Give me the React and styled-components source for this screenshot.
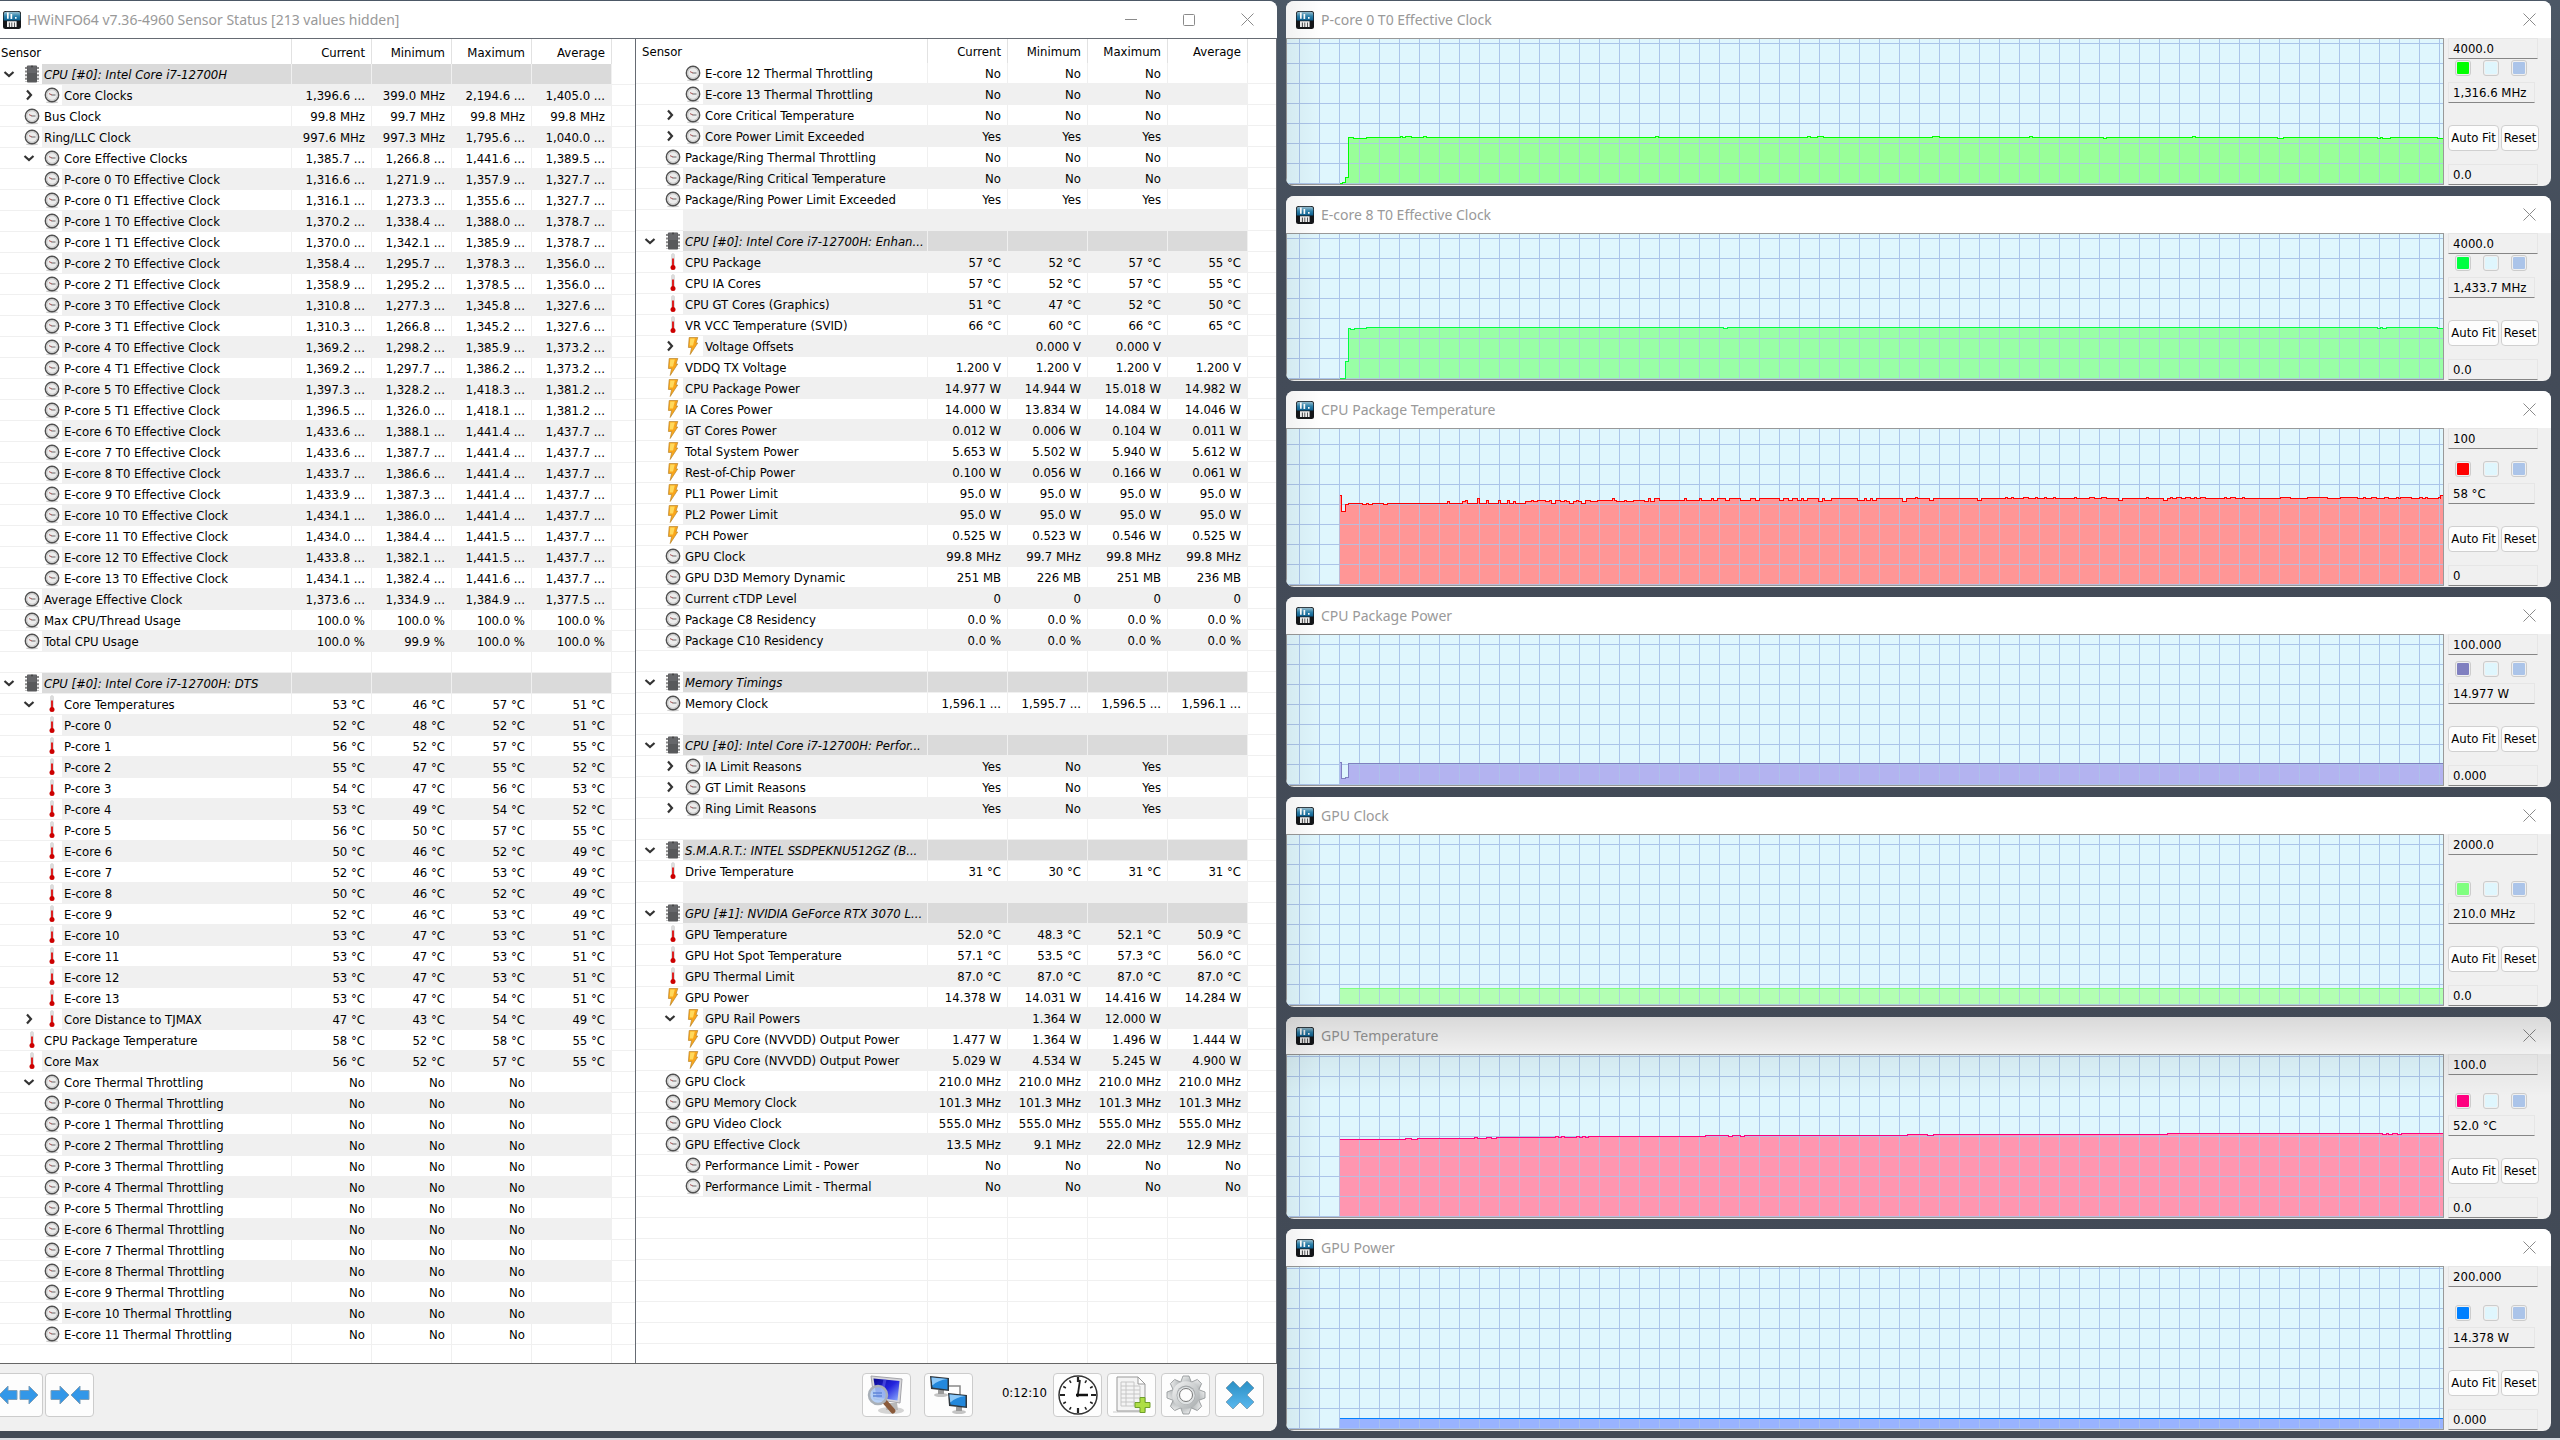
import React from "react";
import styled, { createGlobalStyle, css } from "styled-components";

/* ---------- data ---------- */

// level | icon | chevron | name | current | minimum | maximum | average
const LEFT_ROWS = `
0|chip|open|CPU [#0]: Intel Core i7-12700H
1|gauge|shut|Core Clocks|1,396.6 ...|399.0 MHz|2,194.6 ...|1,405.0 ...
0|gauge||Bus Clock|99.8 MHz|99.7 MHz|99.8 MHz|99.8 MHz
0|gauge||Ring/LLC Clock|997.6 MHz|997.3 MHz|1,795.6 ...|1,040.0 ...
1|gauge|open|Core Effective Clocks|1,385.7 ...|1,266.8 ...|1,441.6 ...|1,389.5 ...
1|gauge||P-core 0 T0 Effective Clock|1,316.6 ...|1,271.9 ...|1,357.9 ...|1,327.7 ...
1|gauge||P-core 0 T1 Effective Clock|1,316.1 ...|1,273.3 ...|1,355.6 ...|1,327.7 ...
1|gauge||P-core 1 T0 Effective Clock|1,370.2 ...|1,338.4 ...|1,388.0 ...|1,378.7 ...
1|gauge||P-core 1 T1 Effective Clock|1,370.0 ...|1,342.1 ...|1,385.9 ...|1,378.7 ...
1|gauge||P-core 2 T0 Effective Clock|1,358.4 ...|1,295.7 ...|1,378.3 ...|1,356.0 ...
1|gauge||P-core 2 T1 Effective Clock|1,358.9 ...|1,295.2 ...|1,378.5 ...|1,356.0 ...
1|gauge||P-core 3 T0 Effective Clock|1,310.8 ...|1,277.3 ...|1,345.8 ...|1,327.6 ...
1|gauge||P-core 3 T1 Effective Clock|1,310.3 ...|1,266.8 ...|1,345.2 ...|1,327.6 ...
1|gauge||P-core 4 T0 Effective Clock|1,369.2 ...|1,298.2 ...|1,385.9 ...|1,373.2 ...
1|gauge||P-core 4 T1 Effective Clock|1,369.2 ...|1,297.7 ...|1,386.2 ...|1,373.2 ...
1|gauge||P-core 5 T0 Effective Clock|1,397.3 ...|1,328.2 ...|1,418.3 ...|1,381.2 ...
1|gauge||P-core 5 T1 Effective Clock|1,396.5 ...|1,326.0 ...|1,418.1 ...|1,381.2 ...
1|gauge||E-core 6 T0 Effective Clock|1,433.6 ...|1,388.1 ...|1,441.4 ...|1,437.7 ...
1|gauge||E-core 7 T0 Effective Clock|1,433.6 ...|1,387.7 ...|1,441.4 ...|1,437.7 ...
1|gauge||E-core 8 T0 Effective Clock|1,433.7 ...|1,386.6 ...|1,441.4 ...|1,437.7 ...
1|gauge||E-core 9 T0 Effective Clock|1,433.9 ...|1,387.3 ...|1,441.4 ...|1,437.7 ...
1|gauge||E-core 10 T0 Effective Clock|1,434.1 ...|1,386.0 ...|1,441.4 ...|1,437.7 ...
1|gauge||E-core 11 T0 Effective Clock|1,434.0 ...|1,384.4 ...|1,441.5 ...|1,437.7 ...
1|gauge||E-core 12 T0 Effective Clock|1,433.8 ...|1,382.1 ...|1,441.5 ...|1,437.7 ...
1|gauge||E-core 13 T0 Effective Clock|1,434.1 ...|1,382.4 ...|1,441.6 ...|1,437.7 ...
0|gauge||Average Effective Clock|1,373.6 ...|1,334.9 ...|1,384.9 ...|1,377.5 ...
0|gauge||Max CPU/Thread Usage|100.0 %|100.0 %|100.0 %|100.0 %
0|gauge||Total CPU Usage|100.0 %|99.9 %|100.0 %|100.0 %
-
0|chip|open|CPU [#0]: Intel Core i7-12700H: DTS
1|temp|open|Core Temperatures|53 °C|46 °C|57 °C|51 °C
1|temp||P-core 0|52 °C|48 °C|52 °C|51 °C
1|temp||P-core 1|56 °C|52 °C|57 °C|55 °C
1|temp||P-core 2|55 °C|47 °C|55 °C|52 °C
1|temp||P-core 3|54 °C|47 °C|56 °C|53 °C
1|temp||P-core 4|53 °C|49 °C|54 °C|52 °C
1|temp||P-core 5|56 °C|50 °C|57 °C|55 °C
1|temp||E-core 6|50 °C|46 °C|52 °C|49 °C
1|temp||E-core 7|52 °C|46 °C|53 °C|49 °C
1|temp||E-core 8|50 °C|46 °C|52 °C|49 °C
1|temp||E-core 9|52 °C|46 °C|53 °C|49 °C
1|temp||E-core 10|53 °C|47 °C|53 °C|51 °C
1|temp||E-core 11|53 °C|47 °C|53 °C|51 °C
1|temp||E-core 12|53 °C|47 °C|53 °C|51 °C
1|temp||E-core 13|53 °C|47 °C|54 °C|51 °C
1|temp|shut|Core Distance to TJMAX|47 °C|43 °C|54 °C|49 °C
0|temp||CPU Package Temperature|58 °C|52 °C|58 °C|55 °C
0|temp||Core Max|56 °C|52 °C|57 °C|55 °C
1|gauge|open|Core Thermal Throttling|No|No|No
1|gauge||P-core 0 Thermal Throttling|No|No|No
1|gauge||P-core 1 Thermal Throttling|No|No|No
1|gauge||P-core 2 Thermal Throttling|No|No|No
1|gauge||P-core 3 Thermal Throttling|No|No|No
1|gauge||P-core 4 Thermal Throttling|No|No|No
1|gauge||P-core 5 Thermal Throttling|No|No|No
1|gauge||E-core 6 Thermal Throttling|No|No|No
1|gauge||E-core 7 Thermal Throttling|No|No|No
1|gauge||E-core 8 Thermal Throttling|No|No|No
1|gauge||E-core 9 Thermal Throttling|No|No|No
1|gauge||E-core 10 Thermal Throttling|No|No|No
1|gauge||E-core 11 Thermal Throttling|No|No|No
`;

const RIGHT_ROWS = `
1|gauge||E-core 12 Thermal Throttling|No|No|No
1|gauge||E-core 13 Thermal Throttling|No|No|No
1|gauge|shut|Core Critical Temperature|No|No|No
1|gauge|shut|Core Power Limit Exceeded|Yes|Yes|Yes
0|gauge||Package/Ring Thermal Throttling|No|No|No
0|gauge||Package/Ring Critical Temperature|No|No|No
0|gauge||Package/Ring Power Limit Exceeded|Yes|Yes|Yes
-
0|chip|open|CPU [#0]: Intel Core i7-12700H: Enhan...
0|temp||CPU Package|57 °C|52 °C|57 °C|55 °C
0|temp||CPU IA Cores|57 °C|52 °C|57 °C|55 °C
0|temp||CPU GT Cores (Graphics)|51 °C|47 °C|52 °C|50 °C
0|temp||VR VCC Temperature (SVID)|66 °C|60 °C|66 °C|65 °C
1|bolt|shut|Voltage Offsets||0.000 V|0.000 V
0|bolt||VDDQ TX Voltage|1.200 V|1.200 V|1.200 V|1.200 V
0|bolt||CPU Package Power|14.977 W|14.944 W|15.018 W|14.982 W
0|bolt||IA Cores Power|14.000 W|13.834 W|14.084 W|14.046 W
0|bolt||GT Cores Power|0.012 W|0.006 W|0.104 W|0.011 W
0|bolt||Total System Power|5.653 W|5.502 W|5.940 W|5.612 W
0|bolt||Rest-of-Chip Power|0.100 W|0.056 W|0.166 W|0.061 W
0|bolt||PL1 Power Limit|95.0 W|95.0 W|95.0 W|95.0 W
0|bolt||PL2 Power Limit|95.0 W|95.0 W|95.0 W|95.0 W
0|bolt||PCH Power|0.525 W|0.523 W|0.546 W|0.525 W
0|gauge||GPU Clock|99.8 MHz|99.7 MHz|99.8 MHz|99.8 MHz
0|gauge||GPU D3D Memory Dynamic|251 MB|226 MB|251 MB|236 MB
0|gauge||Current cTDP Level|0|0|0|0
0|gauge||Package C8 Residency|0.0 %|0.0 %|0.0 %|0.0 %
0|gauge||Package C10 Residency|0.0 %|0.0 %|0.0 %|0.0 %
-
0|chip|open|Memory Timings
0|gauge||Memory Clock|1,596.1 ...|1,595.7 ...|1,596.5 ...|1,596.1 ...
-
0|chip|open|CPU [#0]: Intel Core i7-12700H: Perfor...
1|gauge|shut|IA Limit Reasons|Yes|No|Yes
1|gauge|shut|GT Limit Reasons|Yes|No|Yes
1|gauge|shut|Ring Limit Reasons|Yes|No|Yes
-
0|chip|open|S.M.A.R.T.: INTEL SSDPEKNU512GZ (B...
0|temp||Drive Temperature|31 °C|30 °C|31 °C|31 °C
-
0|chip|open|GPU [#1]: NVIDIA GeForce RTX 3070 L...
0|temp||GPU Temperature|52.0 °C|48.3 °C|52.1 °C|50.9 °C
0|temp||GPU Hot Spot Temperature|57.1 °C|53.5 °C|57.3 °C|56.0 °C
0|temp||GPU Thermal Limit|87.0 °C|87.0 °C|87.0 °C|87.0 °C
0|bolt||GPU Power|14.378 W|14.031 W|14.416 W|14.284 W
1|bolt|open|GPU Rail Powers||1.364 W|12.000 W
1|bolt||GPU Core (NVVDD) Output Power|1.477 W|1.364 W|1.496 W|1.444 W
1|bolt||GPU Core (NVVDD) Output Power|5.029 W|4.534 W|5.245 W|4.900 W
0|gauge||GPU Clock|210.0 MHz|210.0 MHz|210.0 MHz|210.0 MHz
0|gauge||GPU Memory Clock|101.3 MHz|101.3 MHz|101.3 MHz|101.3 MHz
0|gauge||GPU Video Clock|555.0 MHz|555.0 MHz|555.0 MHz|555.0 MHz
0|gauge||GPU Effective Clock|13.5 MHz|9.1 MHz|22.0 MHz|12.9 MHz
1|gauge||Performance Limit - Power|No|No|No|No
1|gauge||Performance Limit - Thermal|No|No|No|No
`;

const BODY_ROWS = 62;

function parseRows(text) {
  const rows = text
    .trim()
    .split("\n")
    .map((line, i) => {
      if (line === "-") return { kind: "gap", tone: i % 2 ? "odd" : "even", values: ["", "", "", ""] };
      const [level, icon, chevron, name, ...v] = line.split("|");
      return {
        kind: icon === "chip" ? "section" : "value",
        tone: icon === "chip" ? "section" : i % 2 ? "odd" : "even",
        level: Number(level),
        icon,
        chevron,
        name,
        values: [0, 1, 2, 3].map((k) => v[k] || ""),
      };
    });
  while (rows.length < BODY_ROWS) rows.push({ kind: "gap", tone: "even", values: ["", "", "", ""] });
  return rows;
}

// Traces are lists of [x, y]: the level y holds from x to the next entry.
const tempTrace = (() => {
  const early =
    "206:346 214:394 226:373 235:370 277:373 289:370 295:373 307:370 340:373 352:370 532:364 538:370 577:364 586:361 592:370 622:355 628:370 649:361 655:370 685:361 691:370 712:361 718:370 730:364 736:370 766:364 784:361 790:364 802:361 826:364 838:361 844:370 856:361 871:364 883:361 889:364 898:370 910:364 919:361 925:364 934:370 946:361 961:364 982:361 1027:355 1033:361 1039:364 1063:361 1069:364 1090:361 1123:364 1135:355 1141:364 1153:355 1168:361 1243:355 1249:361 1288:355 1294:361 1324:355 1330:361 1342:355 1366:361 1378:355 1411:361 1441:355 1456:361 1468:355"
      .split(" ")
      .map((p) => p.split(":").map(Number));
  const late =
    "58-70:361 85-97:361 112-124:361 130-142:361 175-187:364 193-214:361 292-313:361 319-331:361 337-349:361 427-439:364 466-472:352 508-520:361 652-664:361 736-742:352 754-760:352 790-805:352 826-832:352 853-859:352 880-886:352 943-949:352 988-1003:352 1024-1039:352 1075-1087:361 1159-1165:352 1210-1222:361 1231-1237:352 1249-1264:352 1276-1291:352 1303-1309:352 1321-1336:352 1393-1399:352 1411-1426:352 1447-1453:352 1560-1590:352 1640-1700:352 1740-1790:352 1808-1815:352 1834-1848:352 1872-1884:352 1908-1915:352 1920-1952:352 1976-1985:352 1995-2002:352 2034-2040:352"
      .split(" ")
      .flatMap((p) => {
        const [range, y] = p.split(":");
        const [a, b] = range.split("-").map(Number);
        return [
          [1470 + a, Number(y)],
          [1470 + b, 355],
        ];
      });
  return [...early, ...late, [3510, 346]].map(([x, y]) => [Math.round(x / 3) - 17, Math.floor(y / 3) - 49]);
})();

const GRAPHS = [
  {
    title: "P-core 0 T0 Effective Clock", max: "4000.0", value: "1,316.6 MHz", min: "0.0",
    line: "#00ff00", fill: "#99ff99", size: 185,
    trace: [[52,144],[55,143],[58,138],[61,98],[66,99],[79,98],[113,97],[115,98],[118,97],[124,98],[136,97],[139,98],[368,97],[371,98],[520,97],[523,98],[530,97],[536,98],[645,97],[652,98],[742,97],[745,98],[816,99],[819,98],[905,97],[908,98],[990,99],[996,98],[1090,99],[1093,98],[1095,99],[1103,98],[1150,99]],
  },
  {
    title: "E-core 8 T0 Effective Clock", max: "4000.0", value: "1,433.7 MHz", min: "0.0",
    line: "#00ff40", fill: "#99ffa6", size: 185,
    trace: [[52,144],[58,127],[61,94],[63,95],[67,94],[79,93],[436,94],[440,93],[1090,94],[1093,93],[1095,94],[1099,93],[1150,94]],
  },
  {
    title: "CPU Package Temperature", max: "100", value: "58 °C", min: "0",
    line: "#ff0000", fill: "#ff9696", size: 196, trace: tempTrace,
  },
  {
    title: "CPU Package Power", max: "100.000", value: "14.977 W", min: "0.000",
    line: "#8080c0", fill: "#b3b3f0", size: 190,
    trace: [[52,127],[54,143],[58,142],[61,128]],
  },
  {
    title: "GPU Clock", max: "2000.0", value: "210.0 MHz", min: "0.0",
    line: "#80ff80", fill: "#b3ffb3", size: 210, trace: [[52,153]],
  },
  {
    title: "GPU Temperature", max: "100.0", value: "52.0 °C", min: "0.0",
    line: "#ff0080", fill: "#ff96b0", size: 202, shaded: true,
    trace: [[52,84],[118,83],[124,84],[130,83],[187,82],[190,83],[199,82],[204,83],[209,82],[268,81],[271,82],[274,81],[277,82],[289,81],[292,82],[295,81],[298,82],[301,81],[418,80],[441,81],[445,80],[453,81],[457,80],[620,79],[640,80],[646,79],[880,78],[1095,79],[1099,78],[1101,79],[1105,78],[1110,79],[1114,78]],
  },
  {
    title: "GPU Power", max: "200.000", value: "14.378 W", min: "0.000",
    line: "#0080ff", fill: "#99b3ff", size: 202, trace: [[52,151]],
  },
];

/* ---------- styles ---------- */

const UI_FONT = `"DejaVu Sans Condensed", "DejaVu Sans", sans-serif`;
const TITLE_FONT = `"Noto Sans", sans-serif`;

const GlobalStyle = createGlobalStyle`
  *, *::before, *::after { box-sizing: border-box; }
  body { margin: 0; background: #434c59; color: #000; font-family: ${UI_FONT}; font-size: 13px; line-height: 16px; }
  button, input { font: inherit; color: inherit; margin: 0; }
`;

const Desktop = styled.main`
  display: grid;
  grid-template-columns: minmax(0, 1277fr) minmax(0, 1265fr);
  gap: 9px;
  height: 100vh;
  padding: 1px 9px 7px 0;
  border-bottom: 2px solid #d9dce2;
  background: linear-gradient(#4c5866, #434b58 20%, #424a56);
`;

const MainWindow = styled.section`
  display: flex;
  flex-direction: column;
  min-height: 0;
  background: #f0f0f0;
  border-radius: 0 8px 8px 0;
  overflow: hidden;
`;

const TitleBar = styled.header`
  display: flex;
  align-items: center;
  flex: none;
  height: 37px;
  padding: 0 1px 0 ${(p) => p.$inset}px;
  background: #fff;
`;

const TitleText = styled.h1`
  flex: 1;
  margin: 0 0 0 ${(p) => p.$gap}px;
  font: 400 14px/20px ${TITLE_FONT};
  color: #999;
  white-space: nowrap;
`;

const CaptionButton = styled.button`
  display: grid;
  place-items: center;
  width: ${(p) => p.$width}px;
  height: 36px;
  padding: 0;
  border: 0;
  background: none;
`;

const Lists = styled.div`
  display: grid;
  grid-template-columns: minmax(0, 636fr) minmax(0, 641fr);
  flex: 1;
  min-height: 0;
  border-top: 1px solid #666b73;
  border-bottom: 1px solid #666;
`;

const ListPane = styled.div`
  min-height: 0;
  overflow: hidden;
  background: #fff;
  border-right: 1px solid #666b73;
`;

const SensorTable = styled.table`
  width: 100%;
  table-layout: fixed;
  border-collapse: separate;
  border-spacing: 0;
  white-space: nowrap;
`;

const NameCol = styled.col` width: 292px; `;
const ValueCol = styled.col` width: 80px; `;

const HeadCell = styled.th`
  height: ${(p) => p.$height}px;
  padding: ${(p) => (p.$name ? `2px 0 0 ${p.$inset + 1}px` : "2px 6px 0 0")};
  border-right: 1px solid #e2e2e2;
  font-weight: 400;
  text-align: ${(p) => (p.$name ? "left" : "right")};
  &:last-child { border-right: 0; }
`;

const toneColor = { section: "#dadada", odd: "#f0f0f0", even: "#fff" };

const cell = css`
  height: 21px;
  padding: 0;
  border-right: 1px solid #f0f0f0;
  border-bottom: 1px solid #f0f0f0;
`;

const NameCell = styled.td`
  ${cell}
  font-style: ${(p) => (p.$tone === "section" ? "italic" : "normal")};
`;

const ValueCell = styled.td`
  ${cell}
  padding: 2px 6px 0 0;
  background: ${(p) => toneColor[p.$tone]};
  text-align: right;
`;

const EndCell = styled.td`
  ${cell}
  border-right: 0;
`;

const NameLayout = styled.div`
  display: flex;
  align-items: center;
  height: 20px;
  padding-left: ${(p) => p.$inset + p.$level * 20}px;
`;

const NameText = styled.span`
  flex: 1;
  min-width: 0;
  height: 20px;
  padding: 1px 0 0 2px;
  overflow: hidden;
  line-height: 20px;
  background: ${(p) => toneColor[p.$tone]};
`;

const Twisty = styled.button`
  display: grid;
  place-items: center;
  width: 18px;
  height: 20px;
  margin-right: 6px;
  padding: 0;
  border: 0;
  background: none;
`;

const TwistySpace = styled.span`
  width: 24px;
`;

const IconBox = styled.span`
  display: grid;
  place-items: center;
  width: 16px;
  height: 20px;
  margin-right: 2px;
`;

const Toolbar = styled.footer`
  display: flex;
  justify-content: space-between;
  flex: none;
  height: 67px;
  padding: 9px 13px 0 0;
`;

const ToolGroup = styled.div`
  display: flex;
  gap: ${(p) => p.$gap}px;
  margin-left: ${(p) => p.$shift || 0}px;
`;

const ToolButton = styled.button`
  display: grid;
  place-items: center;
  width: 49px;
  height: 44px;
  padding: 0;
  border: 1px solid #ccc;
  border-radius: 4px;
  background: #fdfdfd;
`;

const Elapsed = styled.time`
  width: 80px;
  padding-right: 6px;
  line-height: 40px;
  text-align: right;
`;

const GraphColumn = styled.div`
  display: grid;
  grid-template-rows: ${GRAPHS.map((g) => `minmax(0, ${g.size}fr)`).join(" ")};
  gap: 10px;
  min-height: 0;
`;

const GraphWindow = styled.section`
  position: relative;
  display: flex;
  flex-direction: column;
  min-height: 0;
  border-radius: 8px;
  overflow: hidden;
  background: #f0f0f0;
  &::after {
    content: "";
    position: absolute;
    inset: 0;
    pointer-events: none;
    background:
      linear-gradient(90deg, rgba(0, 0, 0, 0.05), transparent 36px)
      ${(p) => p.$shaded && ", linear-gradient(rgba(0, 0, 0, 0.15), rgba(0, 0, 0, 0.06) 36px, transparent 80px)"};
  }
`;

const GraphBody = styled.div`
  display: flex;
  flex: 1;
  min-height: 0;
`;

const PlotFrame = styled.div`
  flex: 1;
  min-width: 0;
  margin-bottom: 1px;
  border: 1px solid #999;
  background: #dff6fd;
`;

const Plot = styled.svg`
  display: block;
  width: 100%;
  height: 100%;
`;

const SidePanel = styled.div`
  display: flex;
  flex-direction: column;
  flex: none;
  width: 107px;
  padding: 0 12px 1px 4px;
`;

const fieldLook = css`
  display: block;
  height: 21px;
  padding: 0 4px;
  border: 1px solid #e6e6e6;
  border-bottom-color: #868686;
  background: #f0f0f0;
  line-height: 19px;
`;

const LimitField = styled.input`
  ${fieldLook}
  width: 90px;
  border-radius: 0;
  outline: 0;
`;

const Reading = styled.output`
  ${fieldLook}
  width: 87px;
  margin: 6px 0 22px;
  white-space: nowrap;
`;

const Swatches = styled.div`
  display: flex;
  gap: 12px;
  margin: auto 0 0 7px;
`;

const Swatch = styled.button`
  width: 16px;
  height: 16px;
  padding: 1px;
  border: 1px solid #ccc;
  border-radius: 3px;
  background-color: #fff;
  background-clip: content-box, border-box;
  background-image: linear-gradient(${(p) => p.$color}, ${(p) => p.$color});
`;

const Actions = styled.div`
  display: flex;
  gap: 2px;
  margin-bottom: 13px;
`;

const ActionButton = styled.button`
  width: ${(p) => p.$width}px;
  height: 26px;
  padding: 0;
  border: 1px solid #d0d0d0;
  border-radius: 4px;
  background: #fdfdfd;
  white-space: nowrap;
`;

/* ---------- icons ---------- */

const AppIcon = () => (
  <svg width="18" height="18" viewBox="0 0 18 18" aria-hidden="true">
    <defs>
      <linearGradient id="appTop" x1="0" y1="0" x2="0" y2="1">
        <stop offset="0" stopColor="#9fc3d3" />
        <stop offset=".5" stopColor="#2f83ad" />
        <stop offset="1" stopColor="#0b5f90" />
      </linearGradient>
    </defs>
    <rect width="18" height="18" rx="2.500" fill="#141619" />
    <path d="M.7 9.500V3A2.300 2.300 0 0 1 3 .7h12A2.300 2.300 0 0 1 17.300 3v6.500z" fill="url(#appTop)" />
    <path d="M4 1.500h1.700v6.200H4zM7.500 3h1.700v5H7.500zM12 6h1.600v1.700H12z" fill="#fff" />
    <path d="M4 10.300h9.600V16h-1.900v-4.400h-.7V16H9.200v-4.400h-.7V16H6.700v-4.400h-.8V16H4z" fill="#f4f4f4" />
  </svg>
);

const CloseGlyph = () => (
  <svg width="13" height="13" viewBox="0 0 13 13" aria-hidden="true">
    <path d="M.5 .5l12 12M12.5 .5l-12 12" stroke="#8a8a8a" fill="none" />
  </svg>
);

const Chevron = ({ open }) => (
  <svg width="12" height="12" viewBox="0 0 12 12" aria-hidden="true">
    <path d={open ? "M1.5 4l4.5 4 4.5-4" : "M4 1.5l4 4.5-4 4.5"} stroke="#333" strokeWidth="2.2" fill="none" />
  </svg>
);

const RowIcon = ({ kind }) => (
  <svg width="16" height="18" viewBox="0 0 16 18" aria-hidden="true">
    {kind === "gauge" && (
      <>
        <ellipse cx="8" cy="16.3" rx="6" ry="1" fill="#ccc" />
        <circle cx="8" cy="9" r="6.7" fill="#ececec" stroke="#505050" strokeWidth="1.4" />
        <circle cx="8" cy="9" r="5.300" fill="none" stroke="#c4c4c4" />
        <path d="M5 7.600l3 1.400" stroke="#a55" />
        <path d="M7.600 9h3.900" stroke="#666" />
      </>
    )}
    {kind === "temp" && (
      <>
        <rect x="6.500" y=".5" width="3" height="14" rx="1.500" fill="#ddd" stroke="#ccc" strokeWidth=".5" />
        <path d="M7 5.500h2v9H7z" fill="#d22" />
        <circle cx="8" cy="14.600" r="2.500" fill="#c00" />
      </>
    )}
    {kind === "bolt" && (
      <>
        <path d="M4.200 .5h8.600L11 6h1.700L5.200 17.500 6.600 10.500H3.400z" fill="#f9a61a" stroke="#b9862f" strokeWidth=".7" />
        <path d="M5.200 1.500h4.600L8 8.500H4.800z" fill="#ffd95c" />
      </>
    )}
    {kind === "chip" && (
      <>
        <path d="M2 2v15M14 2v15" stroke="#888" strokeWidth="2" strokeDasharray="2 1.6" />
        <rect x="3" y=".5" width="10" height="17" rx=".8" fill="#58595b" />
        <path d="M3.500 1h9v7h-9z" fill="#66676a" />
        <circle cx="8" cy="1.500" r="1" fill="#444" />
      </>
    )}
  </svg>
);

const arrowRight = "M0 5.500h9V1l9 9-9 9v-4.500H0z";

const ArrowsIcon = ({ inward }) => (
  <svg width="40" height="20" viewBox="0 0 40 20" aria-hidden="true">
    <g fill="#3397e8" stroke="#7f9fb8" strokeWidth="1">
      <path d={arrowRight} transform={inward ? "translate(1 0)" : "translate(21 0)"} />
      <path d={arrowRight} transform={inward ? "translate(39 0) scale(-1 1)" : "translate(18 0) scale(-1 1)"} />
    </g>
  </svg>
);

const MonitorSearchIcon = () => (
  <svg width="40" height="40" viewBox="0 0 40 40" aria-hidden="true">
    <defs>
      <linearGradient id="blueScreen" x1="0" y1="0" x2="1" y2="1">
        <stop offset="0" stopColor="#0a0a8c" />
        <stop offset=".5" stopColor="#2222dd" />
        <stop offset="1" stopColor="#8fb0ff" />
      </linearGradient>
    </defs>
    <ellipse cx="24" cy="35.500" rx="13" ry="3.500" fill="#d4d4d4" />
    <path d="M20 28h10l1 7H19z" fill="#b8b8b8" />
    <path d="M4 1l31 3-2 24-26-4z" fill="#d8d8dc" stroke="#a5a5aa" />
    <path d="M6.500 3.500l26 2.500-2 19.500-21-3z" fill="url(#blueScreen)" />
    <path d="M18 4.500l-4 18" stroke="#6a6af6" strokeWidth="3" opacity=".5" />
    <path d="M18 27l8 9" stroke="#8a5a3a" strokeWidth="5" strokeLinecap="round" />
    <circle cx="11" cy="20" r="9" fill="#a9c8f4" fillOpacity=".85" stroke="#a9b0b8" strokeWidth="2.500" />
    <path d="M6 18h9M6 21h9" stroke="#5f86d8" strokeWidth="1.500" />
  </svg>
);

const NetworkIcon = () => (
  <svg width="40" height="40" viewBox="0 0 40 40" aria-hidden="true">
    <path d="M20 11h11v9" stroke="#888" strokeWidth="1.500" fill="none" />
    {[[1, 1], [19, 18]].map(([x, y]) => (
      <g key={x} transform={`translate(${x} ${y})`}>
        <ellipse cx="11" cy="19" rx="7" ry="2" fill="#c4c4c4" />
        <path d="M8 14h6v4H8z" fill="#999" />
        <path d="M0 0l19 2v13L1 13z" fill="#30383f" />
        <path d="M1.500 1.500L17.500 3v10.500L2.500 11.500z" fill="#2388dc" />
        <path d="M1.500 1.500L17.500 3Q8 4 2.300 9.500z" fill="#8cc8f8" />
      </g>
    ))}
  </svg>
);

const ClockIcon = () => (
  <svg width="42" height="42" viewBox="0 0 42 42" aria-hidden="true">
    <circle cx="21" cy="21" r="19" fill="#fff" stroke="#333" strokeWidth="1.500" />
    {Array.from({ length: 12 }, (_, i) => (
      <path key={i} d={i % 3 ? "M21 4v3" : "M21 3v5"} stroke="#222" strokeWidth={i % 3 ? 1.5 : 2.2} transform={`rotate(${i * 30} 21 21)`} />
    ))}
    <path d="M20.500 23L23 6" stroke="#222" strokeWidth="1.800" />
    <path d="M19 21h12" stroke="#111" strokeWidth="2.500" />
  </svg>
);

const SheetIcon = () => (
  <svg width="40" height="40" viewBox="0 0 40 40" aria-hidden="true">
    <path d="M1 36h33v2H1z" fill="#e4e4e4" />
    <path d="M5 2h21l7 7v27H5z" fill="#f4f4f4" stroke="#999" />
    <path d="M26 2v7h7z" fill="#fff" stroke="#999" />
    <path d="M9 7h13M9 11h19M9 15h19M9 19h19M9 23h19M9 27h14M9 31h14M9 7v24M14 7v24M22 7v24M28 11v14" stroke="#c6c6c6" fill="none" />
    <path d="M28 22.500h5v5h5v5h-5v5h-5v-5h-5v-5h5z" fill="#aede45" stroke="#6fa02a" />
  </svg>
);

const GearIcon = () => (
  <svg width="40" height="40" viewBox="0 0 40 40" aria-hidden="true">
    <defs>
      <linearGradient id="steel" x1="0" y1="0" x2="1" y2="1">
        <stop offset="0" stopColor="#f4f4f4" />
        <stop offset=".5" stopColor="#cdd0d1" />
        <stop offset="1" stopColor="#a6aaac" />
      </linearGradient>
    </defs>
    {Array.from({ length: 8 }, (_, i) => (
      <path key={i} d="M14 9l3-8h6l3 8z" fill="url(#steel)" stroke="#8c9092" strokeWidth=".8" transform={`rotate(${i * 45} 20 20)`} />
    ))}
    <circle cx="20" cy="20" r="13.800" fill="url(#steel)" />
    <circle cx="20" cy="20" r="9.500" fill="#a3a7a9" />
    <circle cx="20" cy="20.500" r="8.700" fill="#dfe2e3" />
    <circle cx="20" cy="20" r="6.500" fill="#fdfdfd" stroke="#777" />
  </svg>
);

const CrossIcon = () => (
  <svg width="30" height="30" viewBox="0 0 30 30" aria-hidden="true">
    <defs>
      <linearGradient id="cross" x1="0" y1="0" x2="0" y2="1">
        <stop offset="0" stopColor="#2a8fc4" />
        <stop offset="1" stopColor="#5ab8ee" />
      </linearGradient>
    </defs>
    <path d="M8 1l7 7 7-7 7 7-7 7 7 7-7 7-7-7-7 7-7-7 7-7-7-7z" fill="url(#cross)" stroke="#6f8fa5" strokeWidth=".7" />
  </svg>
);

/* ---------- parts ---------- */

function SensorList({ source, inset, headHeight }) {
  const rows = parseRows(source);
  return (
    <ListPane>
      <SensorTable>
        <colgroup>
          <NameCol />
          <ValueCol />
          <ValueCol />
          <ValueCol />
          <ValueCol />
          <col />
        </colgroup>
        <thead>
          <tr>
            <HeadCell $name $inset={inset} $height={headHeight} scope="col">Sensor</HeadCell>
            {["Current", "Minimum", "Maximum", "Average"].map((h) => (
              <HeadCell key={h} $height={headHeight} scope="col">{h}</HeadCell>
            ))}
            <HeadCell as="td" $height={headHeight} />
          </tr>
        </thead>
        <tbody>
          {rows.map((row, i) => (
            <tr key={i}>
              <NameCell $tone={row.tone}>
                <NameLayout $inset={inset} $level={row.level || 0}>
                  {row.chevron ? (
                    <Twisty aria-label={row.name} aria-expanded={row.chevron === "open"}>
                      <Chevron open={row.chevron === "open"} />
                    </Twisty>
                  ) : (
                    <TwistySpace />
                  )}
                  <IconBox>{row.icon && <RowIcon kind={row.icon} />}</IconBox>
                  <NameText $tone={row.tone}>{row.name}</NameText>
                </NameLayout>
              </NameCell>
              {row.values.map((v, k) => (
                <ValueCell key={k} $tone={row.tone}>{v}</ValueCell>
              ))}
              <EndCell />
            </tr>
          ))}
        </tbody>
      </SensorTable>
    </ListPane>
  );
}

const PLOT_WIDTH = 1156;

function GraphPlot({ graph }) {
  const height = graph.size - 40;
  let line = "";
  let area = `M${graph.trace[0][0]} ${height}`;
  graph.trace.forEach(([x, y], i) => {
    const end = i + 1 < graph.trace.length ? graph.trace[i + 1][0] : PLOT_WIDTH;
    line += `${i ? "L" : "M"}${x + 0.5} ${y + 0.5}L${end + 0.5} ${y + 0.5}`;
    area += `V${y}H${end}`;
  });
  area += `V${height}Z`;

  let grid = "";
  for (let x = PLOT_WIDTH - 4; x > 0; x -= 20) grid += `M${x + 0.5} 0V${height}`;
  for (let y = height - 1; y > 0; y -= 20) grid += `M0 ${y + 0.5}H${PLOT_WIDTH}`;

  return (
    <PlotFrame>
      <Plot viewBox={`0 0 ${PLOT_WIDTH} ${height}`} preserveAspectRatio="none" shapeRendering="crispEdges" role="img" aria-label={graph.title}>
        <path d={grid} stroke="#abc4e9" fill="none" />
        <path d={area} fill={graph.fill} />
        <path d={grid} stroke="#abc4e9" strokeOpacity=".8" fill="none" />
        <path d={line} stroke={graph.line} fill="none" />
      </Plot>
    </PlotFrame>
  );
}

function Graph({ graph }) {
  return (
    <GraphWindow $shaded={graph.shaded}>
      <TitleBar $inset={10}>
        <AppIcon />
        <TitleText as="h2" $gap={7}>{graph.title}</TitleText>
        <CaptionButton $width={42} aria-label="Close"><CloseGlyph /></CaptionButton>
      </TitleBar>
      <GraphBody>
        <GraphPlot graph={graph} />
        <SidePanel>
          <LimitField type="text" aria-label="Upper limit" defaultValue={graph.max} />
          <Swatches>
            <Swatch $color={graph.line} aria-label="Line colour" />
            <Swatch $color="#dff6fd" aria-label="Background colour" />
            <Swatch $color="#abc4e9" aria-label="Grid colour" />
          </Swatches>
          <Reading>{graph.value}</Reading>
          <Actions>
            <ActionButton $width={51}>Auto Fit</ActionButton>
            <ActionButton $width={38}>Reset</ActionButton>
          </Actions>
          <LimitField type="text" aria-label="Lower limit" defaultValue={graph.min} />
        </SidePanel>
      </GraphBody>
    </GraphWindow>
  );
}

export default function App() {
  return (
    <>
      <GlobalStyle />
      <Desktop>
        <MainWindow>
          <TitleBar $inset={3}>
            <AppIcon />
            <TitleText $gap={6}>HWiNFO64 v7.36-4960 Sensor Status [213 values hidden]</TitleText>
            <CaptionButton $width={58} aria-label="Minimize">
              <svg width="12" height="12" viewBox="0 0 12 12" aria-hidden="true">
                <path d="M0 5.500h12" stroke="#8a8a8a" />
              </svg>
            </CaptionButton>
            <CaptionButton $width={58} aria-label="Maximize">
              <svg width="12" height="12" viewBox="0 0 12 12" aria-hidden="true">
                <rect x=".5" y=".5" width="11" height="11" rx="1" stroke="#8a8a8a" fill="none" />
              </svg>
            </CaptionButton>
            <CaptionButton $width={58} aria-label="Close"><CloseGlyph /></CaptionButton>
          </TitleBar>
          <Lists>
            <SensorList source={LEFT_ROWS} inset={0} headHeight={25} />
            <SensorList source={RIGHT_ROWS} inset={5} headHeight={24} />
          </Lists>
          <Toolbar>
            <ToolGroup $gap={2} $shift={-6}>
              <ToolButton aria-label="Expand columns"><ArrowsIcon /></ToolButton>
              <ToolButton aria-label="Shrink columns"><ArrowsIcon inward /></ToolButton>
            </ToolGroup>
            <ToolGroup $gap={0}>
              <ToolGroup $gap={13}>
                <ToolButton aria-label="Sensor summary"><MonitorSearchIcon /></ToolButton>
                <ToolButton aria-label="Remote monitoring"><NetworkIcon /></ToolButton>
              </ToolGroup>
              <Elapsed>0:12:10</Elapsed>
              <ToolGroup $gap={5}>
                <ToolButton aria-label="Reset clock"><ClockIcon /></ToolButton>
                <ToolButton aria-label="Start logging"><SheetIcon /></ToolButton>
                <ToolButton aria-label="Settings"><GearIcon /></ToolButton>
                <ToolButton aria-label="Close sensors"><CrossIcon /></ToolButton>
              </ToolGroup>
            </ToolGroup>
          </Toolbar>
        </MainWindow>
        <GraphColumn>
          {GRAPHS.map((g) => (
            <Graph key={g.title} graph={g} />
          ))}
        </GraphColumn>
      </Desktop>
    </>
  );
}
